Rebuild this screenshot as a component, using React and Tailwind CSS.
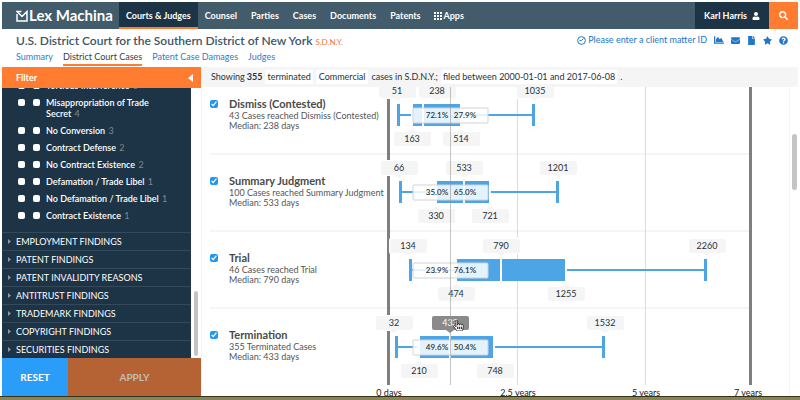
import {
  FaUser,
  FaSearch,
  FaChartArea,
  FaEnvelope,
  FaFile,
  FaStar,
  FaQuestionCircle,
  FaHandPointer,
} from "react-icons/fa";

const tabs = ["Counsel", "Parties", "Cases", "Documents", "Patents"];

const findings = [
  ["Tortious Interference", 6],
  ["Misappropriation of Trade Secret", 4],
  ["No Conversion", 3],
  ["Contract Defense", 2],
  ["No Contract Existence", 2],
  ["Defamation / Trade Libel", 1],
  ["No Defamation / Trade Libel", 1],
  ["Contract Existence", 1],
];

const groups = [
  "EMPLOYMENT FINDINGS",
  "PATENT FINDINGS",
  "PATENT INVALIDITY REASONS",
  "ANTITRUST FINDINGS",
  "TRADEMARK FINDINGS",
  "COPYRIGHT FINDINGS",
  "SECURITIES FINDINGS",
];

// x positions are in plot units, values are days
const milestones = [
  {
    name: "Dismiss (Contested)",
    detail: "43 Cases reached Dismiss (Contested)",
    median: 238,
    before: "72.1%",
    after: "27.9%",
    low: 18, q1: 33, mid: 43, q3: 80, high: 153,
    top: [[51, 17], [238, 57], [1035, 155]],
    bottom: [[163, 32], [514, 81]],
  },
  {
    name: "Summary Judgment",
    detail: "100 Cases reached Summary Judgment",
    median: 533,
    before: "35.0%",
    after: "65.0%",
    low: 20, q1: 57, mid: 84, q3: 109, high: 177,
    top: [[66, 19], [533, 84], [1201, 178]],
    bottom: [[330, 56], [721, 110]],
  },
  {
    name: "Trial",
    detail: "46 Cases reached Trial",
    median: 790,
    before: "23.9%",
    after: "76.1%",
    low: 30, q1: 77, mid: 121, q3: 185, high: 325,
    top: [[134, 28], [790, 121], [2260, 327]],
    bottom: [[474, 76], [1255, 186]],
  },
  {
    name: "Termination",
    detail: "355 Terminated Cases",
    median: 433,
    before: "49.6%",
    after: "50.4%",
    low: 16, q1: 40, mid: 70, q3: 113, high: 223,
    top: [[32, 14], [433, 70], [1532, 225]],
    bottom: [[210, 39], [748, 115]],
  },
];

function Logo() {
  return (
    <a href="#" className="flex items-center gap-px text-white w-[103px] shrink-0">
      <svg width="12" height="12" viewBox="0 0 12 12" fill="none" stroke="currentColor" strokeWidth="1.5">
        <path d="M1 4V11H11V1.500L6 6.500L1 1.500H5.500" />
      </svg>
      <span className="text-[15px] leading-none whitespace-nowrap">Lex Machina</span>
    </a>
  );
}

function Header() {
  return (
    <header className="flex h-[27px] shrink-0 bg-[#435c6c] pl-[14px] text-[9px] font-bold text-white">
      <Logo />
      <nav className="flex flex-1 whitespace-nowrap">
        <a href="#" className="flex items-center px-[7px] pt-[2px] bg-[#1d3446] border-b-2 border-[#ff7c30]">
          Courts &amp; Judges
        </a>
        {tabs.map((tab) => (
          <a key={tab} href="#" className="flex items-center px-[7px]">
            {tab}
          </a>
        ))}
        <a href="#" className="flex items-center gap-[2px] px-[6px]">
          <svg width="8" height="8" viewBox="0 0 8 8" fill="currentColor">
            {[0, 3, 6].map((y) =>
              [0, 3, 6].map((x) => <rect key={`${x}-${y}`} x={x} y={y} width="2" height="2" />)
            )}
          </svg>
          Apps
        </a>
      </nav>
      <button className="flex items-center justify-center gap-[5px] w-[74px] bg-[#1d3446]">
        Karl Harris
        <FaUser size={8} />
      </button>
      <button aria-label="Search" className="flex items-center justify-center w-[29px] bg-[#ff7c30]">
        <FaSearch size={9} />
      </button>
    </header>
  );
}

function TitleBar() {
  return (
    <div className="shrink-0 h-[38px] pl-[14px] pr-[10px] pt-[3px]">
      <div className="flex items-start justify-between h-[18px]">
        <h1 className="text-[12px] leading-[18px] font-semibold text-[#3c5666] whitespace-nowrap">
          U.S. District Court for the Southern District of New York{" "}
          <span className="text-[8px] font-normal text-[#f0783a]">S.D.N.Y.</span>
        </h1>
        <div className="flex items-center gap-[7px] h-4 text-[9px] text-[#2277c8] whitespace-nowrap">
          <a href="#" className="flex items-center gap-[2px]">
            <svg width="9" height="9" viewBox="0 0 9 9" fill="none" stroke="currentColor">
              <circle cx="4.500" cy="4.500" r="3.900" />
              <path d="M2.500 4.500H4.500L6.500 2.500" />
            </svg>
            Please enter a client matter ID
          </a>
          <FaChartArea size={10} />
          <FaEnvelope size={9} />
          <FaFile size={9} />
          <FaStar size={9} />
          <FaQuestionCircle size={9} />
        </div>
      </div>
      <nav className="flex gap-[10px] text-[9px] leading-[14px] text-[#2e7cc9]">
        <a href="#">Summary</a>
        <a href="#" className="border-b-2 border-[#ff7c30] text-[#33404a]">District Court Cases</a>
        <a href="#">Patent Case Damages</a>
        <a href="#">Judges</a>
      </nav>
    </div>
  );
}

function Sidebar() {
  return (
    <aside className="flex flex-col w-[199px] shrink-0">
      <div className="flex items-center justify-between h-[21px] shrink-0 bg-[#ff7c30] pl-[14px] pr-2 text-[9px] font-bold text-white">
        Filter
        <svg width="5" height="8" viewBox="0 0 5 8" fill="currentColor">
          <path d="M5 0V8L0 4Z" />
        </svg>
      </div>

      <div className="flex flex-1 min-h-0">
        <div className="flex flex-col justify-end flex-1 overflow-hidden bg-[#1d3446] text-white">
          <ul className="pb-[8px] text-[9px] leading-[11px] font-semibold">
            {findings.map(([name, count]) => (
              <li key={name} className="flex items-start pl-4 py-[3px]">
                <input type="checkbox" aria-label={`Any ${name}`} className="appearance-none size-[7px] mt-[2px] mr-2 rounded-[2px] bg-white" />
                <label className="flex items-start w-[140px]">
                  <input type="checkbox" className="appearance-none shrink-0 size-[7px] mt-[2px] mr-[6px] rounded-[2px] bg-white" />
                  <span>
                    {name} <span className="ml-px font-normal text-[#7d8a94]">{count}</span>
                  </span>
                </label>
              </li>
            ))}
          </ul>
          {groups.map((group) => (
            <button key={group} className="flex items-center gap-[5px] h-[18px] shrink-0 pl-[6px] border-t border-[#34495a] text-[9px] text-left">
              <svg width="3" height="5" viewBox="0 0 3 5" fill="#8d99a3">
                <path d="M0 0L3 2.500L0 5Z" />
              </svg>
              {group}
            </button>
          ))}
        </div>
        <div className="flex flex-col justify-end w-[10px] pb-[2px] items-center">
          <div className="w-1 h-[65px] rounded-full bg-[#c4c4c4]" />
        </div>
      </div>

      <div className="flex h-[38px] shrink-0 text-[10px] font-bold">
        <button className="w-[66px] bg-[#2a9df8] text-white">RESET</button>
        <button className="flex-1 bg-[#b56235] text-[#c4bdb8]">APPLY</button>
      </div>
    </aside>
  );
}

function Chip({ x, y, value, up, active }) {
  const tip = up ? y - 10 : y + 10;
  const base = up ? y - 7 : y + 7;
  const fill = active ? "#8a8a8a" : "#f5f5f5";
  return (
    <g>
      <rect x={x - 19} y={y - 8} width="39" height="16" rx="2" fill="#fff" />
      <rect x={x - 18} y={y - 7} width="37" height="14" rx="2" fill={fill} />
      <path d={`M${x - 4} ${base}L${x} ${tip}L${x + 4} ${base}Z`} fill={fill} />
      <text x={x} y={y + 3} textAnchor="middle" fontSize="9" fill={active ? "#fff" : "#26323c"}>
        {value}
      </text>
    </g>
  );
}

function BoxRow({ row, y, active }) {
  return (
    <g>
      {row.top.map(([value, x]) => (
        <Chip key={value} x={x} y={y - 24} value={value} active={active && value === row.median} />
      ))}
      {row.bottom.map(([value, x]) => (
        <Chip key={value} x={x} y={y + 24} value={value} up />
      ))}
      <g fill="#4ea5e6">
        <rect x={row.low - 1} y={y - 11} width="3" height="22" />
        <rect x={row.low} y={y - 1} width={row.q1 - row.low - 2} height="2" />
        <rect x={row.q1} y={y - 11} width={row.q3 - row.q1} height="22" />
        <rect x={row.q3 + 2} y={y - 1} width={row.high - row.q3 - 2} height="2" />
        <rect x={row.high - 1} y={y - 11} width="3" height="22" />
      </g>
      <rect x={row.mid - 1} y={y - 11} width="2" height="22" fill="#fff" />
      <rect x="33" y={y - 7} width="75" height="15" rx="1" fill="#fff" fillOpacity="0.85" stroke="#cfd3d6" />
      <g fontSize="8" fontWeight="600" textAnchor="middle" fill="#26323c">
        <text x="57" y={y + 3}>{row.before}</text>
        <text x="85" y={y + 3}>{row.after}</text>
      </g>
    </g>
  );
}

function Plot() {
  return (
    <svg width="414" height="309" className="absolute left-[178px] top-0 overflow-visible">
      {[66, 143, 220].map((y) => (
        <rect key={y} x="0" y={y} width="370" height="2" fill="#f5f5f5" />
      ))}
      <rect x="137" y="0" width="1" height="298" fill="#dcdcdc" />
      <rect x="265" y="0" width="1" height="298" fill="#dcdcdc" />
      <rect x="7" y="12" width="3" height="286" fill="#7f7f7f" />
      <rect x="369" y="0" width="3" height="298" fill="#7f7f7f" />
      {milestones.map((row, i) => (
        <BoxRow key={row.name} row={row} y={28 + Math.round(i * 77.3)} active={i === 3} />
      ))}
      <rect x="70" y="0" width="1" height="298" fill="#8a8a8a" fillOpacity="0.5" />
      <g fontSize="9" textAnchor="middle" fill="#222">
        <text x="9" y="309">0 days</text>
        <text x="138" y="309">2.5 years</text>
        <text x="266" y="309">5 years</text>
        <text x="368" y="309">7 years</text>
      </g>
      <FaHandPointer x="73" y="233" size={11} color="#fff" stroke="#333" strokeWidth="45" />
    </svg>
  );
}

function Results() {
  return (
    <main className="flex flex-col flex-1 min-w-0">
      <p className="flex items-center h-5 shrink-0 bg-[#f5f5f5] pl-[10px] text-[9px] text-[#26323c] whitespace-nowrap">
        Showing <b className="ml-[2px]">355</b>
        <span className="ml-[3px] bg-white px-[2px] leading-[14px]">terminated</span>
        <span className="ml-[3px] bg-white px-[3px] leading-[14px]">Commercial</span>
        <span className="ml-[3px]">cases in S.D.N.Y.;</span>
        <span className="ml-[3px] bg-white px-[2px] leading-[14px]">filed between 2000-01-01 and 2017-06-08</span>
        <span className="ml-[3px]">.</span>
      </p>

      <div className="flex flex-1 min-h-0">
        <div className="relative flex-1 overflow-hidden border-l border-gray-100 pl-2">
          <div className="-mt-[11px] w-[172px]">
            {milestones.map((row) => (
              <label
                key={row.name}
                className="flex items-start h-[77px] pt-[19px] border-t-2 border-[#f5f5f5] whitespace-nowrap"
              >
                <input type="checkbox" defaultChecked className="size-2 mt-[3px] mr-[11px] shrink-0 accent-[#2196f3]" />
                <span className="flex flex-col text-[9px] leading-[10px] text-[#555]">
                  <b className="text-[11px] leading-[14px] text-[#4a4a4a]">{row.name}</b>
                  <span>{row.detail}</span>
                  <span>Median: {row.median} days</span>
                </span>
              </label>
            ))}
          </div>
          <Plot />
        </div>
        <div className="w-[9px] border-l border-gray-100 pt-[47px] pl-[2px]">
          <div className="w-[5px] h-[56px] rounded-full bg-[#c4c4c4]" />
        </div>
      </div>
    </main>
  );
}

export default function App() {
  return (
    <div className="flex flex-col h-screen overflow-hidden bg-[#8a8454] font-['Lato',sans-serif]">
      <div className="flex flex-col flex-1 min-h-0 border-b border-[#33321f] bg-white px-[2px] pt-[2px]">
        <Header />
        <TitleBar />
        <div className="flex flex-1 min-h-0">
          <Sidebar />
          <Results />
        </div>
      </div>
      <div className="h-[3px] shrink-0" />
    </div>
  );
}
